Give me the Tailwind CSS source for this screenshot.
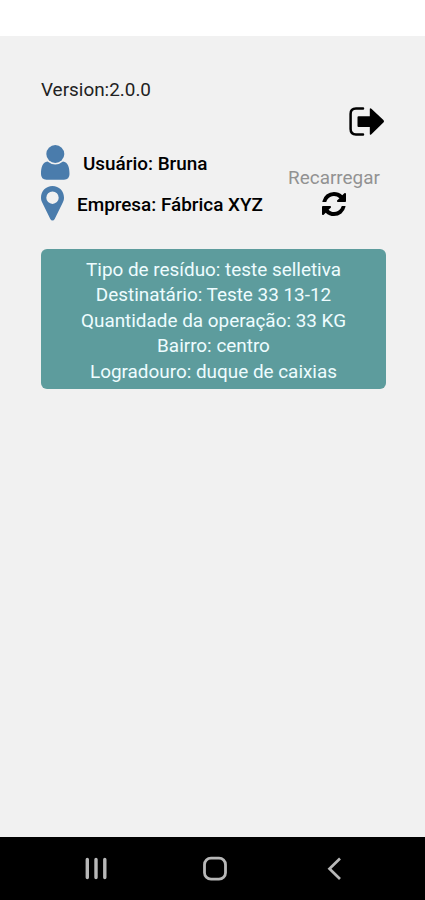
<!DOCTYPE html>
<html lang="pt-BR">
<head>
<meta charset="utf-8">
<meta name="viewport" content="width=device-width, initial-scale=1">
<title>Coletas</title>
<script src="https://cdn.jsdelivr.net/npm/@tailwindcss/browser@4"></script>
</head>
<body class="bg-white font-[Roboto,sans-serif] text-[18.9px] text-[#111]">
<div class="flex h-[900px] w-[425px] flex-col overflow-hidden whitespace-nowrap">
  <div class="h-9 shrink-0 bg-white"></div>
  <main class="flex-1 bg-[#f1f1f1] pt-[42px] pr-[39px] pl-[41px]">
    <p class="h-[29px] leading-6 text-[#222]">Version:2.0.0</p>
    <div class="flex h-[29px] justify-end pr-[2px]">
      <svg class="h-[29px] w-[35px]" viewBox="0 0 35 29" aria-label="Sair">
        <path d="M14 1.6H7Q1.6 1.6 1.6 7v15q0 5.4 5.4 5.4h7" fill="none" stroke="#000" stroke-width="2.5" stroke-linecap="round"/>
        <path d="M9.500 9.300h11.300V2.300q0-1.900 1.600-.5L34.400 13q1.200 1.300 0 2.600L22.400 27.200q-1.600 1.300-1.600-.5v-6.700H9.500q-1 0-1-1v-8.700q0-1 1-1z" fill="#000"/>
      </svg>
    </div>
    <div class="flex h-[113px] justify-between pt-[9px]">
      <div class="font-medium text-black">
        <div class="flex h-[41px] items-start">
          <svg class="h-[35px] w-[29px] text-[#4a7cac]" viewBox="0 0 29 35" fill="currentColor">
            <circle cx="14.300" cy="9" r="9"/>
            <path d="M6.500 16.500Q14.300 22.700 22 16.500C27 17.200 28.500 22 28.500 29q0 5.700-5.500 5.700H5.500Q0 34.700 0 29C0 22 1.500 17.200 6.500 16.500z"/>
          </svg>
          <span class="ml-[13px] leading-[37px]">Usuário: Bruna</span>
        </div>
        <div class="flex items-start">
          <svg class="h-[35px] w-[23px] text-[#4a7cac]" viewBox="0 0 23 35">
            <path fill="currentColor" fill-rule="evenodd" d="M11.500 0C5 0 0 5 0 11.500c0 2 .4 3.500 1.200 5L9.300 33q.8 1.500 2.200 1.500T13.700 33l8.100-16.500c.8-1.500 1.200-3 1.200-5C23 5 18 0 11.500 0zm0 5.500a6.200 6.200 0 1 1 0 12.400 6.200 6.200 0 0 1 0-12.400z"/>
          </svg>
          <span class="ml-[13px] leading-[37px]">Empresa: Fábrica XYZ</span>
        </div>
      </div>
      <div class="mr-[6px] flex w-[92px] flex-col items-center pt-5 text-[#929292]">
        <span class="h-[27px] leading-[25px]">Recarregar</span>
        <svg class="h-6 w-6" viewBox="0 0 1536 1536" fill="#000" aria-hidden="true">
          <path d="M1511 928q0 5-1 7-64 268-268 434.500T764 1536q-146 0-282.500-55T238 1324l-129 129q-19 19-45 19t-45-19-19-45V960q0-26 19-45t45-19h448q26 0 45 19t19 45-19 45l-137 137q71 66 161 102t187 36q134 0 250-65t186-179q11-17 53-117 8-23 30-23h192q13 0 22.500 9.500t9.500 22.500zm25-800v448q0 26-19 45t-45 19h-448q-26 0-45-19t-19-45 19-45l138-138Q969 256 768 256q-134 0-250 65T332 500q-11 17-53 117-8 23-30 23H50q-13 0-22.500-9.500T18 608v-7q65-268 270-434.500T768 0q146 0 284 55.500T1297 212l130-129q19-19 45-19t45 19 19 45z"/>
        </svg>
      </div>
    </div>
    <section class="h-[140px] rounded-md bg-[#5d9c9d] pt-2 text-center leading-[25.4px] text-[#eefcff]">
      <p>Tipo de resíduo: teste selletiva</p>
      <p>Destinatário: Teste 33 13-12</p>
      <p>Quantidade da operação: 33 KG</p>
      <p>Bairro: centro</p>
      <p>Logradouro: duque de caixias</p>
    </section>
  </main>
  <nav class="flex h-[63px] shrink-0 items-start bg-black pt-[18px] pl-[84px] text-[#b8b8b8]">
    <svg class="h-7 w-6" viewBox="0 0 24 28" fill="none" stroke="currentColor" stroke-width="3.400" stroke-linecap="round"><path d="M3.300 4.500v18M12 4.500v18M20.800 4.500v18"/></svg>
    <svg class="ml-[93px] h-7 w-7" viewBox="0 0 28 28" fill="none" stroke="currentColor" stroke-width="2.800"><rect x="3.500" y="3.200" width="21" height="21" rx="6.500"/></svg>
    <svg class="ml-[96px] h-7 w-5" viewBox="0 0 20 28" fill="none" stroke="currentColor" stroke-width="2.700"><path d="M15 3.500 4.500 13.700 15 24"/></svg>
  </nav>
</div>
</body>
</html>
